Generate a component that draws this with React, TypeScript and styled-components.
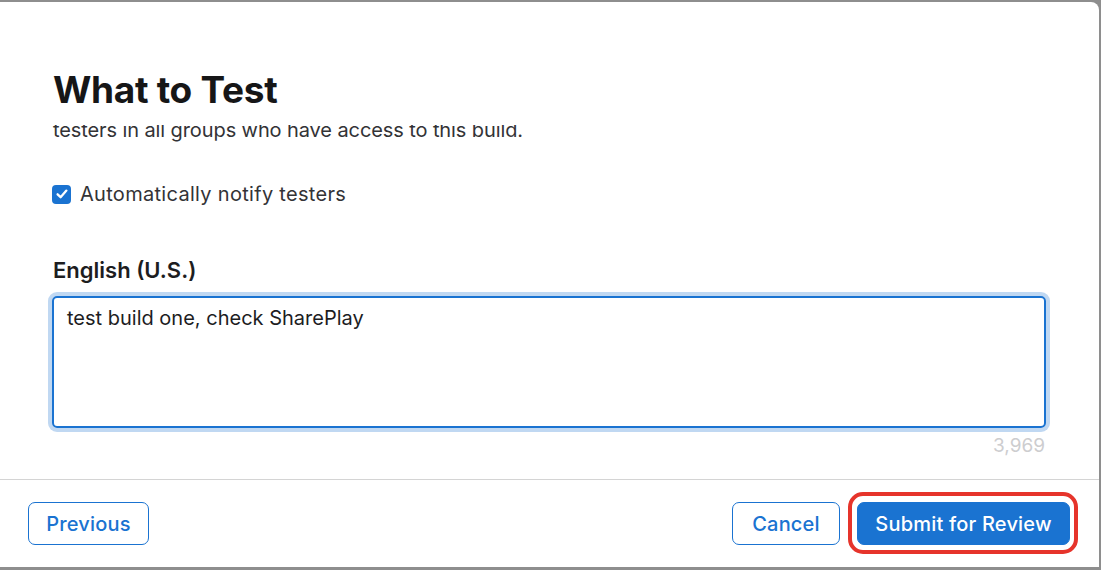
import React from "react";
import styled, { createGlobalStyle } from "styled-components";

const GlobalStyle = createGlobalStyle`
  html, body {
    margin: 0;
    padding: 0;
    background: #8e8e8e;
  }
  body {
    font-family: Inter, "Noto Sans", "Liberation Sans", sans-serif;
    -webkit-font-smoothing: antialiased;
  }
`;

const BLUE = "#1a73d1";

const Backdrop = styled.div`
  box-sizing: border-box;
  width: 1101px;
  height: 570px;
  padding: 2px 2px 3px 0;
  display: flex;
`;

const Modal = styled.div`
  flex: 1;
  background: #ffffff;
  border-radius: 0 8px 0 0;
  display: flex;
  flex-direction: column;
  overflow: hidden;
`;

const Header = styled.div`
  height: 123px;
  box-sizing: border-box;
  padding: 66px 53px 0;
  flex: none;
`;

const Title = styled.h1`
  margin: 0;
  font-size: 37px;
  line-height: 44px;
  font-weight: 700;
  letter-spacing: -0.3px;
  color: #161617;
`;

const Body = styled.div`
  flex: 1;
  overflow: hidden;
  padding: 0 53px 0 52px;
`;

const Scroller = styled.div`
  margin-top: -31px;
  display: flex;
  flex-direction: column;
`;

const Description = styled.p`
  margin: 0 0 0 1px;
  font-size: 20px;
  line-height: 24px;
  letter-spacing: -0.1px;
  color: #333336;
`;

const CheckRow = styled.label`
  margin-top: 40px;
  display: flex;
  align-items: center;
  gap: 9px;
  height: 24px;
  font-size: 20px;
  letter-spacing: 0.3px;
  color: #333336;
`;

const Check = styled.span`
  width: 19px;
  height: 19px;
  border-radius: 4px;
  background: ${BLUE};
  display: flex;
  align-items: center;
  justify-content: center;
  flex: none;
`;

const FieldLabel = styled.div`
  margin: 50px 0 0 1px;
  font-size: 22px;
  line-height: 28px;
  font-weight: 600;
  color: #1d1d1f;
`;

const TextArea = styled.div`
  margin-top: 12px;
  box-sizing: border-box;
  height: 132px;
  border: 2px solid ${BLUE};
  border-radius: 5px;
  box-shadow: 0 0 0 4px #c0d8f2;
  padding: 8px 13px;
  font-size: 20px;
  line-height: 24px;
  color: #1d1d1f;
`;

const Counter = styled.div`
  margin-top: 6px;
  padding-right: 1px;
  text-align: right;
  font-size: 19px;
  line-height: 24px;
  color: #cdcdcf;
`;

const Footer = styled.div`
  flex: none;
  height: 88px;
  box-sizing: border-box;
  border-top: 1px solid #d4d4d4;
  padding: 22px 29px 0 28px;
  display: flex;
  align-items: flex-start;
`;

const Spacer = styled.div`
  flex: 1;
`;

const Button = styled.button<{ $primary?: boolean; $w: number }>`
  position: relative;
  box-sizing: border-box;
  width: ${(p) => p.$w}px;
  height: 43px;
  border-radius: 7px;
  border: 1.5px solid ${BLUE};
  background: ${(p) => (p.$primary ? BLUE : "#ffffff")};
  color: ${(p) => (p.$primary ? "#ffffff" : BLUE)};
  font-family: inherit;
  font-size: 20px;
  font-weight: 500;
  letter-spacing: 0.2px;
  padding: 0;
  cursor: pointer;
`;

const Highlight = styled.span`
  position: absolute;
  left: -10px;
  right: -9px;
  top: -11px;
  bottom: -10px;
  border: 4px solid #e6342b;
  border-radius: 15px;
  pointer-events: none;
`;

const Gap = styled.div`
  width: 17px;
  flex: none;
`;

export default function App() {
  return (
    <>
      <GlobalStyle />
      <Backdrop>
        <Modal>
          <Header>
            <Title>What to Test</Title>
          </Header>
          <Body>
            <Scroller>
              <Description>
                Describe what you want testers to test. This will be sent to
                <br />
                testers in all groups who have access to this build.
              </Description>
              <CheckRow>
                <Check>
                  <svg width="14" height="14" viewBox="0 0 14 14">
                    <path
                      d="M2.6 7.3 L5.6 10.2 L11.4 3.6"
                      fill="none"
                      stroke="#ffffff"
                      strokeWidth="2.3"
                      strokeLinecap="round"
                      strokeLinejoin="round"
                    />
                  </svg>
                </Check>
                Automatically notify testers
              </CheckRow>
              <FieldLabel>English (U.S.)</FieldLabel>
              <TextArea>test build one, check SharePlay</TextArea>
              <Counter>3,969</Counter>
            </Scroller>
          </Body>
          <Footer>
            <Button $w={121}>Previous</Button>
            <Spacer />
            <Button $w={108}>Cancel</Button>
            <Gap />
            <Button $w={213} $primary>
              Submit for Review
              <Highlight />
            </Button>
          </Footer>
        </Modal>
      </Backdrop>
    </>
  );
}
